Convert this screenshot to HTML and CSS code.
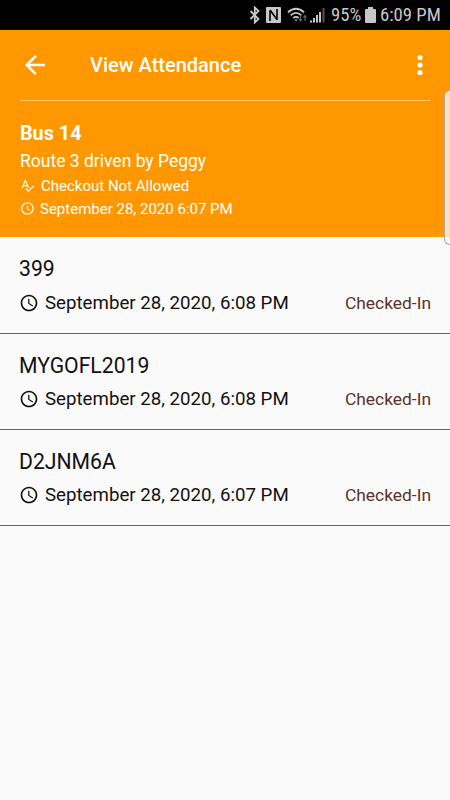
FILE: index.html
```html
<!DOCTYPE html>
<html lang="en">
<head>
  <meta charset="UTF-8">
  <meta name="viewport" content="width=device-width, initial-scale=1.0">
  <title>View Attendance</title>
  <link rel="stylesheet" href="styles.css">
</head>
<body>

<!-- Shared icons -->
<svg class="defs">
  <symbol id="clock" viewBox="0 0 24 24">
    <path d="M11.99 2C6.47 2 2 6.48 2 12s4.47 10 9.99 10C17.52 22 22 17.52 22 12S17.52 2 11.99 2zM12 20c-4.42 0-8-3.58-8-8s3.58-8 8-8 8 3.58 8 8-3.58 8-8 8zm.5-13H11v6l5.25 3.15.75-1.23-4.5-2.67z"/>
  </symbol>
</svg>

<!-- Status bar -->
<div class="status-bar">
  <svg class="bluetooth" viewBox="0 0 12 18">
    <path d="M1.500 5l8 8-3.700 3.500v-15L9.500 5l-8 8"/>
  </svg>
  <svg class="nfc" viewBox="0 0 16 16">
    <rect width="15" height="16" rx="1"/>
    <path d="M4 14V3.500M4 3l7 9.500M11 13V2"/>
  </svg>
  <svg class="wifi" viewBox="0 0 21 16">
    <path class="arc" d="M1 5.200q8-7 16 0M3.700 8.200q5.300-4.600 10.600 0M6.300 11q2.700-2.300 5.400 0"/>
    <path class="dot" d="M7.500 12.500h3L9 14.300z"/>
    <path class="arrows" d="M13.500 8.500v5M12 12l1.500 2 1.500-2M18 14V9M16.500 10.500L18 8.500l1.500 2"/>
  </svg>
  <svg class="signal" viewBox="0 0 16 16">
    <path d="M1 15.500v-2M4 15.500v-4.500M7 15.500V8M10 15.500V5"/>
    <path class="off" d="M13.500 15.500V1"/>
  </svg>
  <span class="status-text percent">95%</span>
  <svg class="battery" viewBox="0 0 11 16">
    <path d="M3 0h5v2h2q1 0 1 1v12q0 1-1 1H1q-1 0-1-1V3q0-1 1-1h2z"/>
  </svg>
  <span class="status-text time">6:09 PM</span>
</div>

<!-- Header -->
<div class="header">
  <div class="toolbar">
    <svg class="back" viewBox="0 0 24 24">
      <path d="M20 11H7.830l5.590-5.590L12 4l-8 8 8 8 1.410-1.410L7.830 13H20v-2z"/>
    </svg>
    <h1>View Attendance</h1>
    <svg class="more" viewBox="0 0 6 22">
      <circle cx="3" cy="3.500" r="2.600"/>
      <circle cx="3" cy="11" r="2.600"/>
      <circle cx="3" cy="18.500" r="2.600"/>
    </svg>
  </div>
  <div class="bus">
    <h2>Bus 14</h2>
    <div class="route">Route 3 driven by Peggy</div>
    <div class="info">
      <svg viewBox="0 0 24 24">
        <path d="M12.450 16h2.090L9.430 3H7.570L2.460 16h2.090l1.120-3h5.640l1.140 3zm-6.020-5L8.500 5.480 10.570 11H6.430zm15.160.590l-8.090 8.090L9.830 16l-1.410 1.410 5.090 5.090L23 13l-1.410-1.410z"/>
      </svg>
      <span class="checkout">Checkout Not Allowed</span>
    </div>
    <div class="info">
      <svg><use href="#clock"/></svg>
      <span class="date">September 28, 2020 6:07 PM</span>
    </div>
  </div>
</div>
<div class="edge-handle"></div>

<!-- Attendance list -->
<div class="list">
  <div class="item">
    <div class="name">399</div>
    <div class="details">
      <svg><use href="#clock"/></svg>
      <span class="when">September 28, 2020, 6:08 PM</span>
      <span class="status">Checked-In</span>
    </div>
  </div>
  <div class="item">
    <div class="name">MYGOFL2019</div>
    <div class="details">
      <svg><use href="#clock"/></svg>
      <span class="when">September 28, 2020, 6:08 PM</span>
      <span class="status">Checked-In</span>
    </div>
  </div>
  <div class="item">
    <div class="name">D2JNM6A</div>
    <div class="details">
      <svg><use href="#clock"/></svg>
      <span class="when">September 28, 2020, 6:07 PM</span>
      <span class="status">Checked-In</span>
    </div>
  </div>
</div>

</body>
</html>
```
FILE: styles.css
```css
* { box-sizing: border-box; }
body { margin: 0; min-height: 800px; font-family: Roboto, sans-serif; background-color: #fafafa; }
h1, h2 { margin: 0; }
svg { flex: none; fill: currentColor; }
.defs { display: none; }

/* Status bar */
.status-bar {
  display: flex;
  align-items: center;
  justify-content: flex-end;
  height: 30px;
  padding-right: 9px;
  background: #000;
  color: #c8c8c8;
}
.status-text { font-family: "Roboto Condensed", Roboto, sans-serif; font-stretch: 75%; font-size: 18.7px; line-height: 32px; white-space: nowrap; }
.percent { width: 30px; margin-right: 4px; }
.time { width: 61px; }
.bluetooth { width: 12px; height: 18px; margin-right: 5px; fill: none; stroke: currentColor; stroke-width: 1.8; }
.nfc { width: 16px; height: 16px; margin-right: 5px; }
.nfc path { fill: none; stroke: #000; stroke-width: 1.6; }
.wifi { width: 21px; height: 16px; margin-right: 2px; }
.wifi .arc { fill: none; stroke: currentColor; stroke-width: 1.8; }
.wifi .arrows { fill: none; stroke: #666; stroke-width: 1.2; }
.signal { width: 16px; height: 16px; margin-right: 5px; fill: none; stroke: currentColor; stroke-width: 2; }
.signal .off { stroke: #555; }
.battery { width: 11px; height: 16px; margin-right: 4px; }

/* Header */
.header { height: 207px; padding: 0 20px; background: #ff9800; color: #fff; }
.toolbar {
  display: flex;
  align-items: center;
  height: 71px;
  border-bottom: 1px solid #ffc960;
}
.back { width: 30px; height: 30px; }
h1 { flex: 1; margin-left: 40px; font-size: 20px; font-weight: 500; }
.more { width: 6px; height: 22px; margin-right: 7px; }
.bus { padding-top: 21px; }
h2 { font-size: 19.8px; line-height: 24px; font-weight: 700; }
.route { margin-top: 3px; font-size: 17.5px; line-height: 24px; }
.info { display: flex; align-items: center; height: 23px; font-size: 15px; }
.route + .info { margin-top: 1px; }
.route + .info svg { margin-right: 6px; }
.info svg { width: 15px; height: 15px; margin-right: 5px; }

/* Scroll handle at the screen edge */
.edge-handle {
  position: absolute;
  top: 90px;
  right: 0;
  width: 6px;
  height: 155px;
  border: 1px solid #aaa;
  border-right: none;
  border-radius: 6px 0 0 6px;
  background: rgba(250, 250, 250, 0.75);
}

/* Attendance list */
.item { height: 96px; padding: 19px 19px 0; border-bottom: 1px solid #666; color: #111; }
.item:first-child { height: 97px; }
.name { font-size: 21.2px; line-height: 26px; }
.details { display: flex; align-items: center; height: 26px; margin-top: 7px; }
.item:first-child .details { margin-top: 8px; }
.details svg { width: 20px; height: 20px; margin-right: 6px; }
.when { font-size: 18.7px; }
.status { margin-left: auto; font-size: 17.4px; color: #5d302b; }
```
